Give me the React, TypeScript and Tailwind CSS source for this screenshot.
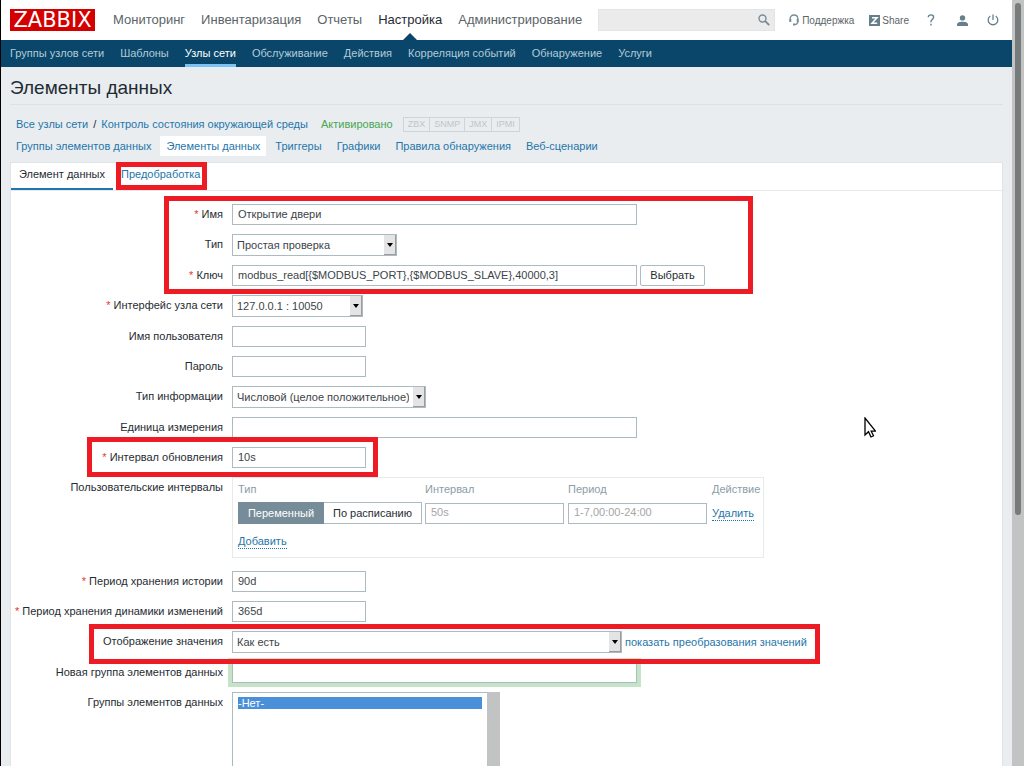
import type { ReactNode } from "react";

const mainMenu = ["Мониторинг", "Инвентаризация", "Отчеты", "Настройка", "Администрирование"];

const subMenu = [
  "Группы узлов сети",
  "Шаблоны",
  "Узлы сети",
  "Обслуживание",
  "Действия",
  "Корреляция событий",
  "Обнаружение",
  "Услуги",
];

const hostLinks = [
  "Группы элементов данных",
  "Элементы данных",
  "Триггеры",
  "Графики",
  "Правила обнаружения",
  "Веб-сценарии",
];

const inputClass = "h-[21px] border border-[#acbbc2] bg-white px-[5px] pb-[2px] text-[11px] text-[#3c4449] outline-none";

function Row({ id, label, required, children }: { id: string; label: string; required?: boolean; children: ReactNode }) {
  return (
    <div className="flex items-start gap-[9px]">
      <label htmlFor={id} className="w-[212px] shrink-0 text-right leading-[21px] whitespace-nowrap">
        {required && <span className="text-[#e33734]">* </span>}
        {label}
      </label>
      <div className="flex items-center gap-[3px]">{children}</div>
    </div>
  );
}

function Select({ id, value, width }: { id: string; value: string; width: string }) {
  return (
    <div className={`relative h-[22px] ${width}`}>
      <select
        id={id}
        className="h-full w-full appearance-none border border-[#acbbc2] bg-white pr-4 pl-1 text-[11px] text-[#3c4449] outline-none"
      >
        <option>{value}</option>
      </select>
      <span className="pointer-events-none absolute top-px right-px bottom-px flex w-3 items-center justify-center border-r border-b border-[#9c9c9c] bg-[#e4e4e4]">
        <svg width="6" height="4" viewBox="0 0 6 4">
          <path d="M0 0h6L3 4z" fill="#000" />
        </svg>
      </span>
    </div>
  );
}

function Highlight({ className }: { className: string }) {
  return <span className={`pointer-events-none absolute z-10 border-5 border-[#ed1c24] ${className}`} />;
}

function Header() {
  return (
    <header>
      <div className="flex h-10 items-center bg-white pr-[13px] pl-[9px]">
        <a
          href="#"
          className="flex h-[22px] w-[85px] shrink-0 items-center justify-center bg-[#d40000] font-['DejaVu_Sans',sans-serif] text-[21px] leading-[22px] text-white"
        >
          ZABBIX
        </a>
        <nav className="ml-[18px] flex gap-4 text-[13px]">
          {mainMenu.map((item) => (
            <a
              key={item}
              href="#"
              className={`relative flex h-10 items-center ${item === "Настройка" ? "text-[#1f2c33]" : "text-[#5b6468]"}`}
            >
              {item}
              {item === "Настройка" && (
                <span className="absolute bottom-0 left-1/2 -ml-[7px] border-x-7 border-b-7 border-x-transparent border-b-[#0a466a]" />
              )}
            </a>
          ))}
        </nav>
        <div className="relative ml-auto h-[22px] w-[177px]">
          <input type="search" aria-label="Поиск" className="h-full w-full border border-[#e2e5e6] bg-[#ebebeb] px-2 text-[11px] outline-none" />
          <button aria-label="Найти" className="absolute top-[5px] right-[5px]">
            <svg width="12" height="12" viewBox="0 0 12 12" fill="none" stroke="#768d99">
              <circle cx="4.5" cy="4.5" r="3.5" strokeWidth="1.4" />
              <path d="M7.2 7.2l4 4" strokeWidth="1.9" />
            </svg>
          </button>
        </div>
        <div className="ml-[14px] flex items-center text-[10px] text-[#5b6468]">
          <a href="#" className="flex items-center gap-[3px]">
            <svg width="10" height="12" viewBox="0 0 10 12" fill="none" stroke="#768d99">
              <path d="M1.2 6V4.6C1.2 2.4 2.8 1 5 1s3.8 1.4 3.8 3.6v2.9c0 1.9-1.2 3-3.3 3" strokeWidth="1.3" />
              <path d="M1.3 5v3M8.7 5v3" strokeWidth="2" />
              <path d="M4 10.5h2" strokeWidth="1.8" />
            </svg>
            Поддержка
          </a>
          <a href="#" className="ml-[15px] flex items-center gap-[2px]">
            <svg width="11" height="11" viewBox="0 0 11 11">
              <path d="M0 0h11v11H0z" fill="#667f8b" />
              <path d="M3 2.8h5L3 8.2h5.2" fill="none" stroke="#fff" strokeWidth="1.5" />
            </svg>
            Share
          </a>
          <a href="#" aria-label="Справка" className="ml-[18px]">
            <svg width="8" height="12" viewBox="0 0 8 12" fill="none" stroke="#667f8b" strokeWidth="1.4">
              <path d="M1.3 3.2C1.3 1.7 2.3.9 3.900.9s2.700.9 2.700 2.300c0 1.900-2.600 2.100-2.600 4.400v.6" />
              <path d="M4 9.8v1.600" />
            </svg>
          </a>
          <a href="#" aria-label="Профиль" className="ml-[22px]">
            <svg width="11" height="11" viewBox="0 0 11 11" fill="#667f8b">
              <circle cx="5.5" cy="2.9" r="2.7" />
              <path d="M0 11V9.2C0 7.5 3 6.7 5.5 6.7S11 7.5 11 9.200V11z" />
            </svg>
          </a>
          <button aria-label="Выход" className="ml-[19px]">
            <svg width="12" height="12" viewBox="0 0 12 12" fill="none" stroke="#667f8b" strokeWidth="1.3">
              <path d="M6 .5V6M3.300 2A4.800 4.800 0 1 0 8.700 2" />
            </svg>
          </button>
        </div>
      </div>
      <nav className="flex h-[27px] gap-4 bg-[#0a466a] pl-[9px]">
        {subMenu.map((item) => (
          <a
            key={item}
            href="#"
            className={`border-b-3 pt-[3px] leading-[21px] whitespace-nowrap ${item === "Узлы сети" ? "border-[#7cc3f5] text-white" : "border-transparent text-[#b3cbd9]"}`}
          >
            {item}
          </a>
        ))}
      </nav>
    </header>
  );
}

function HostNav() {
  return (
    <div className="px-[9px] text-[#1f76aa]">
      <div className="mt-[12px] flex h-[15px] items-center px-[6px]">
        <a href="#">Все узлы сети</a>
        <span className="px-[5px] text-[#1f2c33]">/</span>
        <a href="#">Контроль состояния окружающей среды</a>
        <span className="ml-[13px] text-[#4aa552]">Активировано</span>
        <span className="ml-[10px] flex divide-x divide-[#d0d4d6] border border-[#d0d4d6] text-[9px] leading-[13px] text-[#bfc5c8]">
          {["ZBX", "SNMP", "JMX", "IPMI"].map((type) => (
            <span key={type} className="px-1">{type}</span>
          ))}
        </span>
      </div>
      <nav className="mt-[4px] mb-[6px] flex gap-[3px]">
        {hostLinks.map((item) => (
          <a
            key={item}
            href="#"
            className={`px-[6px] leading-[20px] whitespace-nowrap ${item === "Элементы данных" ? "bg-white" : ""}`}
          >
            {item}
          </a>
        ))}
      </nav>
    </div>
  );
}

function CustomIntervals() {
  return (
    <div className="h-[81px] w-[532px] border border-[#e6eaec] px-[5px] pt-[2px]">
      <table className="w-full table-fixed">
        <thead>
          <tr className="h-[22px] text-left text-[#8b9da6]">
            <th className="w-[187px] pb-[3px] font-normal">Тип</th>
            <th className="w-[143px] pb-[3px] font-normal">Интервал</th>
            <th className="w-[144px] pb-[3px] font-normal">Период</th>
            <th className="pb-[3px] font-normal">Действие</th>
          </tr>
        </thead>
        <tbody>
          <tr className="h-[22px]">
            <td>
              <div className="flex text-center leading-5">
                <label className="w-[86px] border border-[#768d99] bg-[#768d99] text-white">
                  <input type="radio" name="interval-type" defaultChecked className="sr-only" />
                  Переменный
                </label>
                <label className="w-[98px] border border-l-0 border-[#acbbc2] bg-white">
                  <input type="radio" name="interval-type" className="sr-only" />
                  По расписанию
                </label>
              </div>
            </td>
            <td>
              <input aria-label="Интервал" placeholder="50s" className={`${inputClass} w-[139px] placeholder:text-[#a5a5a5]`} />
            </td>
            <td>
              <input aria-label="Период" placeholder="1-7,00:00-24:00" className={`${inputClass} w-[139px] placeholder:text-[#a5a5a5]`} />
            </td>
            <td>
              <button className="border-b border-dotted border-[#1f76aa] leading-[14px] text-[#1f76aa]">Удалить</button>
            </td>
          </tr>
        </tbody>
      </table>
      <button className="mt-[10px] border-b border-dotted border-[#1f76aa] leading-[14px] text-[#1f76aa]">Добавить</button>
    </div>
  );
}

function ItemForm() {
  return (
    <form className="flex flex-col gap-[9px] pt-[13px] pb-5" onSubmit={(e) => e.preventDefault()}>
      <div className="relative flex flex-col gap-[9px]">
        <Row id="name" label="Имя" required>
          <input id="name" defaultValue="Открытие двери" className={`${inputClass} w-[405px]`} />
        </Row>
        <Row id="type" label="Тип">
          <Select id="type" value="Простая проверка" width="w-[165px]" />
        </Row>
        <Row id="key" label="Ключ" required>
          <input id="key" defaultValue="modbus_read[{$MODBUS_PORT},{$MODBUS_SLAVE},40000,3]" className={`${inputClass} w-[405px]`} />
          <button className="h-[21px] w-[65px] rounded-xs border border-[#acbbc2] bg-white">Выбрать</button>
        </Row>
        <Highlight className="-top-2 -bottom-2 left-[153px] w-[589px]" />
      </div>
      <Row id="interface" label="Интерфейс узла сети" required>
        <Select id="interface" value="127.0.0.1 : 10050" width="w-[131px]" />
      </Row>
      <Row id="username" label="Имя пользователя">
        <input id="username" className={`${inputClass} w-[134px]`} />
      </Row>
      <Row id="password" label="Пароль">
        <input id="password" type="password" className={`${inputClass} w-[134px]`} />
      </Row>
      <Row id="value-type" label="Тип информации">
        <Select id="value-type" value="Числовой (целое положительное)" width="w-[194px]" />
      </Row>
      <Row id="units" label="Единица измерения">
        <input id="units" className={`${inputClass} w-[405px]`} />
      </Row>
      <div className="relative">
        <Row id="delay" label="Интервал обновления" required>
          <input id="delay" defaultValue="10s" className={`${inputClass} w-[134px]`} />
        </Row>
        <Highlight className="-top-[10px] -bottom-[9px] left-[76px] w-[291px]" />
      </div>
      <div className="mb-1 flex gap-[9px]">
        <span className="w-[212px] shrink-0 text-right leading-[21px]">Пользовательские интервалы</span>
        <CustomIntervals />
      </div>
      <Row id="history" label="Период хранения истории" required>
        <input id="history" defaultValue="90d" className={`${inputClass} w-[134px]`} />
      </Row>
      <Row id="trends" label="Период хранения динамики изменений" required>
        <input id="trends" defaultValue="365d" className={`${inputClass} w-[134px]`} />
      </Row>
      <div className="relative">
        <Row id="valuemap" label="Отображение значения">
          <Select id="valuemap" value="Как есть" width="w-[390px]" />
          <a href="#" className="text-[#1f76aa]">показать преобразования значений</a>
        </Row>
        <Highlight className="-top-[7px] -bottom-[11px] left-[78px] w-[731px]" />
      </div>
      <Row id="new-group" label="Новая группа элементов данных">
        <input id="new-group" className={`${inputClass} w-[405px] ring-4 ring-[#c5e3c7]`} />
      </Row>
      <Row id="groups" label="Группы элементов данных">
        <div className="flex h-[150px] w-[268px]">
          <select
            id="groups"
            multiple
            defaultValue={["0"]}
            className="h-full flex-1 overflow-hidden border border-r-0 border-[#acbbc2] bg-white px-[5px] py-1 outline-none"
          >
            <option
              value="0"
              className="min-h-0 p-0 leading-[13px] text-white checked:bg-[linear-gradient(#4a90d9,#4a90d9)] checked:[-webkit-text-fill-color:white]"
            >
              -Нет-
            </option>
          </select>
          <span className="w-[13px] bg-[#c2c4c3]" />
        </div>
      </Row>
    </form>
  );
}

export default function App() {
  return (
    <div className="relative flex h-screen border-l border-black bg-[#e9edf0] font-['Liberation_Sans',Arial,sans-serif] text-[11px] text-[#1f2c33]">
      <div className="min-w-0 flex-1 overflow-y-auto [scrollbar-width:none]">
        <Header />
        <h1 className="mx-[9px] flex h-[38px] items-center border-b border-[#dce1e4] pt-[6px] text-[19px]">
          Элементы данных
        </h1>
        <HostNav />
        <main className="mx-[9px] border border-[#dfe4e7] bg-white">
          <div className="flex h-7 border-b border-[#e6eaec]">
            <button className="w-[102px] border-b-2 border-[#1f76aa] pb-[2px]">Элемент данных</button>
            <button className="relative ml-[3px] w-[91px] border-b-2 border-transparent pb-[2px] pl-[5px] text-left text-[#1f76aa]">
              Предобработка
              <Highlight className="inset-x-0 -top-px -bottom-[2px]" />
            </button>
          </div>
          <ItemForm />
        </main>
      </div>

      {/* Page scrollbar */}
      <div className="w-3 shrink-0 bg-[#c2c4c3] pt-[3px] pl-[3px]">
        <div className="h-[512px] w-[6px] rounded-full bg-[#777b7c]" />
      </div>

      {/* Mouse pointer */}
      <svg className="absolute top-[417px] left-[863px]" width="12" height="21" viewBox="0 0 12 21">
        <path d="M1 1v17l3.500-3.300L7 20l2.500-1.200-2.300-4.600H11.500z" fill="#fff" stroke="#000" strokeWidth="1.300" />
      </svg>
    </div>
  );
}
